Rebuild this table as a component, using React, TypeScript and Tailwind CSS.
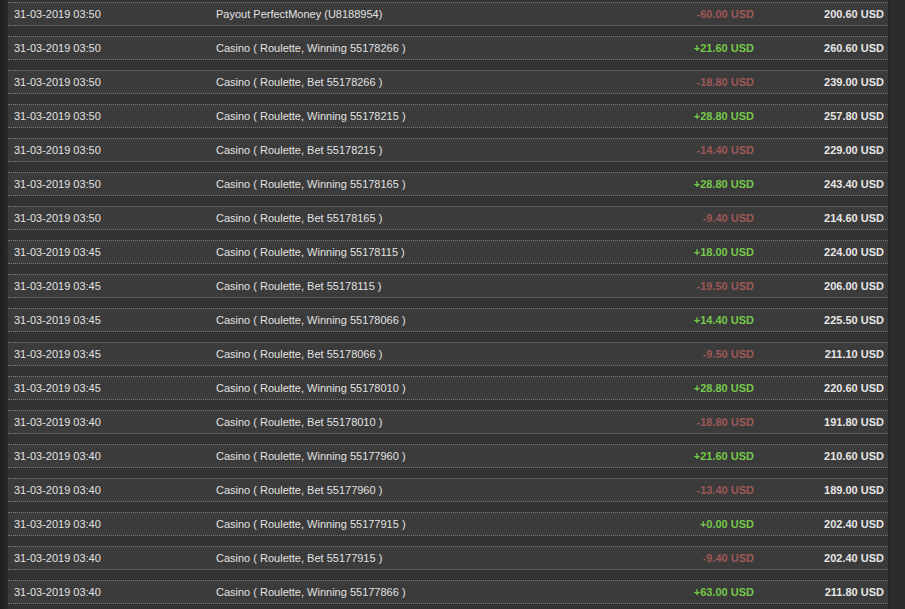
const rows: [string, string, string, string][] = [
  ["31-03-2019 03:50", "Payout PerfectMoney (U8188954)", "-60.00 USD", "200.60 USD"],
  ["31-03-2019 03:50", "Casino ( Roulette, Winning 55178266 )", "+21.60 USD", "260.60 USD"],
  ["31-03-2019 03:50", "Casino ( Roulette, Bet 55178266 )", "-18.80 USD", "239.00 USD"],
  ["31-03-2019 03:50", "Casino ( Roulette, Winning 55178215 )", "+28.80 USD", "257.80 USD"],
  ["31-03-2019 03:50", "Casino ( Roulette, Bet 55178215 )", "-14.40 USD", "229.00 USD"],
  ["31-03-2019 03:50", "Casino ( Roulette, Winning 55178165 )", "+28.80 USD", "243.40 USD"],
  ["31-03-2019 03:50", "Casino ( Roulette, Bet 55178165 )", "-9.40 USD", "214.60 USD"],
  ["31-03-2019 03:45", "Casino ( Roulette, Winning 55178115 )", "+18.00 USD", "224.00 USD"],
  ["31-03-2019 03:45", "Casino ( Roulette, Bet 55178115 )", "-19.50 USD", "206.00 USD"],
  ["31-03-2019 03:45", "Casino ( Roulette, Winning 55178066 )", "+14.40 USD", "225.50 USD"],
  ["31-03-2019 03:45", "Casino ( Roulette, Bet 55178066 )", "-9.50 USD", "211.10 USD"],
  ["31-03-2019 03:45", "Casino ( Roulette, Winning 55178010 )", "+28.80 USD", "220.60 USD"],
  ["31-03-2019 03:40", "Casino ( Roulette, Bet 55178010 )", "-18.80 USD", "191.80 USD"],
  ["31-03-2019 03:40", "Casino ( Roulette, Winning 55177960 )", "+21.60 USD", "210.60 USD"],
  ["31-03-2019 03:40", "Casino ( Roulette, Bet 55177960 )", "-13.40 USD", "189.00 USD"],
  ["31-03-2019 03:40", "Casino ( Roulette, Winning 55177915 )", "+0.00 USD", "202.40 USD"],
  ["31-03-2019 03:40", "Casino ( Roulette, Bet 55177915 )", "-9.40 USD", "202.40 USD"],
  ["31-03-2019 03:40", "Casino ( Roulette, Winning 55177866 )", "+63.00 USD", "211.80 USD"],
];

export default function App() {
  return (
    <div className="flex h-[609px] w-[905px] overflow-hidden bg-[#323232] font-['Liberation_Sans',Arial,sans-serif] text-[11px]">
      <div className="w-[8px] shrink-0 bg-gradient-to-r from-[#1c1c1c] to-[#2a2a2a]" />
      <div className="flex w-[880px] shrink-0 flex-col gap-[10px] pt-[2px]">
        {rows.map(([date, desc, amount, balance], i) => (
          <div
            key={i}
            className="flex h-[24px] shrink-0 items-center border-y border-dotted border-[#7a7a7a] bg-[#3b3b3b] text-[#e2e2e2]"
          >
            <div className="w-[208px] shrink-0 pl-[6px]">{date}</div>
            <div className="w-[379px] shrink-0">{desc}</div>
            <div
              className={
                amount.startsWith("+")
                  ? "w-[159px] shrink-0 text-right font-bold text-[#76c84a]"
                  : "w-[159px] shrink-0 text-right font-bold text-[#9e5757]"
              }
            >
              {amount}
            </div>
            <div className="w-[130px] shrink-0 text-right font-bold text-[#e6e6e6]">{balance}</div>
          </div>
        ))}
      </div>
      <div className="flex-1 border-l border-[#242424] bg-[#2b2b2b]" />
    </div>
  );
}
